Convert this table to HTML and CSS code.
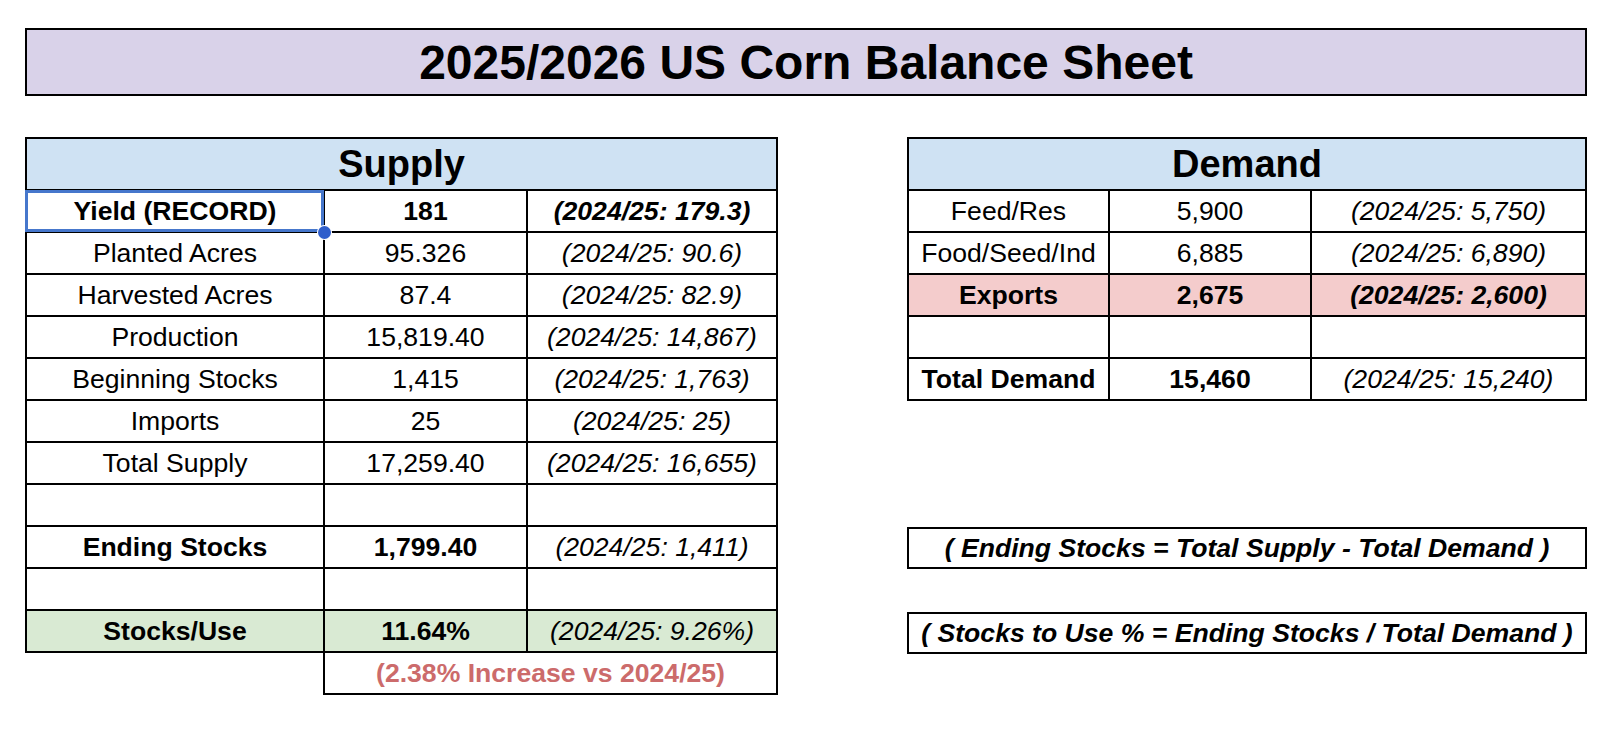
FILE: index.html
```html
<!DOCTYPE html>
<html lang="en">
<head>
<meta charset="utf-8">
<title>2025/2026 US Corn Balance Sheet</title>
<link rel="stylesheet" href="styles.css">
</head>
<body>
<div class="page">
  <div class="title">2025/2026 US Corn Balance Sheet</div>
  <div class="main">
    <div class="supply-col">
      <div class="sheet supply">
        <div class="hdr">Supply</div>

        <div class="c b selected">Yield (RECORD)<span class="sel-box"></span><span class="sel-dot"></span></div>
        <div class="c b">181</div>
        <div class="c b i">(2024/25: 179.3)</div>

        <div class="c">Planted Acres</div>
        <div class="c">95.326</div>
        <div class="c i">(2024/25: 90.6)</div>

        <div class="c">Harvested Acres</div>
        <div class="c">87.4</div>
        <div class="c i">(2024/25: 82.9)</div>

        <div class="c">Production</div>
        <div class="c">15,819.40</div>
        <div class="c i">(2024/25: 14,867)</div>

        <div class="c">Beginning Stocks</div>
        <div class="c">1,415</div>
        <div class="c i">(2024/25: 1,763)</div>

        <div class="c">Imports</div>
        <div class="c">25</div>
        <div class="c i">(2024/25: 25)</div>

        <div class="c">Total Supply</div>
        <div class="c">17,259.40</div>
        <div class="c i">(2024/25: 16,655)</div>

        <div class="c"></div>
        <div class="c"></div>
        <div class="c"></div>

        <div class="c b">Ending Stocks</div>
        <div class="c b">1,799.40</div>
        <div class="c i">(2024/25: 1,411)</div>

        <div class="c"></div>
        <div class="c"></div>
        <div class="c"></div>

        <div class="c b green">Stocks/Use</div>
        <div class="c b green">11.64%</div>
        <div class="c i green">(2024/25: 9.26%)</div>
      </div>
      <div class="note">(2.38% Increase vs 2024/25)</div>
    </div>

    <div class="demand-col">
      <div class="sheet demand">
        <div class="hdr">Demand</div>

        <div class="c">Feed/Res</div>
        <div class="c">5,900</div>
        <div class="c i">(2024/25: 5,750)</div>

        <div class="c">Food/Seed/Ind</div>
        <div class="c">6,885</div>
        <div class="c i">(2024/25: 6,890)</div>

        <div class="c b red">Exports</div>
        <div class="c b red">2,675</div>
        <div class="c b i red">(2024/25: 2,600)</div>

        <div class="c"></div>
        <div class="c"></div>
        <div class="c"></div>

        <div class="c b">Total Demand</div>
        <div class="c b">15,460</div>
        <div class="c i">(2024/25: 15,240)</div>
      </div>
      <div class="formula f1">( Ending Stocks = Total Supply - Total Demand )</div>
      <div class="formula f2">( Stocks to Use % = Ending Stocks / Total Demand )</div>
    </div>
  </div>
</div>
</body>
</html>
```

FILE: styles.css
```css
html, body {
  margin: 0;
  padding: 0;
  background: #ffffff;
}

body {
  font-family: "Liberation Sans", Arial, sans-serif;
  color: #000000;
}

.page {
  padding: 28px 0 0 25px;
  width: 1562px;
}

.title {
  box-sizing: border-box;
  height: 68px;
  border: 2px solid #000;
  background: #d9d2e9;
  display: flex;
  align-items: center;
  justify-content: center;
  font-weight: 700;
  font-size: 48px;
}

.main {
  display: flex;
  align-items: flex-start;
  gap: 129px;
  margin-top: 41px;
}

.sheet {
  display: grid;
  background: #000;
  padding: 2px;
  gap: 2px;
  grid-template-rows: 50px;
  grid-auto-rows: 40px;
}

.supply {
  grid-template-columns: 296px 201px 248px;
}

.demand {
  grid-template-columns: 199px 200px 273px;
}

.hdr {
  grid-column: 1 / -1;
  grid-row: 1;
  background: #cfe2f3;
  display: flex;
  align-items: center;
  justify-content: center;
  font-weight: 700;
  font-size: 38px;
}

.c {
  background: #fff;
  display: flex;
  align-items: center;
  justify-content: center;
  font-size: 26.6px;
  white-space: nowrap;
}

.b {
  font-weight: 700;
}

.i {
  font-style: italic;
}

.green {
  background: #d9ead3;
}

.red {
  background: #f4cccc;
}

.selected {
  position: relative;
}

.sel-box {
  position: absolute;
  left: -2px;
  top: -1px;
  right: -1px;
  bottom: -1px;
  border: 3px solid #4677cc;
  pointer-events: none;
}

.sel-dot {
  position: absolute;
  right: -8px;
  bottom: -8px;
  width: 13px;
  height: 13px;
  border-radius: 50%;
  background: #2f5ecb;
  box-shadow: 0 0 0 1px #fff;
}

.note {
  box-sizing: border-box;
  margin-left: 298px;
  width: 455px;
  height: 42px;
  border: 2px solid #000;
  border-top: 0;
  display: flex;
  align-items: center;
  justify-content: center;
  font-weight: 700;
  font-size: 26.6px;
  color: #cc6b6b;
}

.demand-col {
  display: flex;
  flex-direction: column;
  width: 680px;
}

.formula {
  box-sizing: border-box;
  height: 42px;
  border: 2px solid #000;
  display: flex;
  align-items: center;
  justify-content: center;
  font-weight: 700;
  font-style: italic;
  font-size: 26.6px;
  white-space: nowrap;
}

.f1 {
  margin-top: 126px;
}

.f2 {
  margin-top: 43px;
}
```
